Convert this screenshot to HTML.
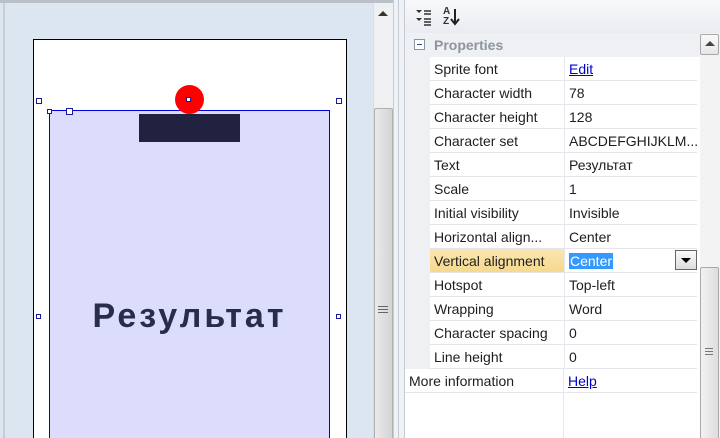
<!DOCTYPE html>
<html style="overflow:hidden;width:720px;height:438px"><head><meta charset="utf-8"><style>
*{margin:0;padding:0;box-sizing:border-box}
body{width:720px;height:438px;overflow:hidden;position:relative;background:#f0f0f0;font-family:"Liberation Sans","DejaVu Sans",sans-serif;font-size:14px;color:#1e1e1e}
.a{position:absolute}
.row{position:absolute;left:430px;width:267px;height:24px;border-bottom:1px solid #e3e6eb;background:#fff}
.row .l{position:absolute;left:4px;top:4px;white-space:nowrap}
.row .v{position:absolute;left:134px;top:0;height:23px;padding:4px 4px 0;white-space:nowrap;border-left:1px solid #e3e6eb;width:134px}
.h{position:absolute;width:6px;height:6px;border:1px solid #1a1aa0;background:#fff}
</style></head><body>
<div class="a" style="left:0;top:0;width:393px;height:438px;background:#dce6f1;border-top:3px solid #b9c0c8"></div>
<div class="a" style="left:3px;top:3px;width:2px;height:435px;background:#c8ced6"></div>
<div class="a" style="left:33px;top:39px;width:314px;height:399px;background:#fff;border:1px solid #000;border-bottom:none"></div>
<div class="a" style="left:49px;top:110px;width:281px;height:328px;background:#dcdcfc;border:1px solid #0000e0;border-bottom:none"></div>
<div class="a" style="left:139px;top:114px;width:101px;height:28px;background:#212240"></div>
<div class="a" style="left:49px;top:297px;width:281px;text-align:center;font-family:'Liberation Sans',sans-serif;font-weight:bold;font-size:34px;letter-spacing:3px;color:#2a2c4c">Результат</div>
<div class="a" style="left:175px;top:85px;width:29px;height:29px;border-radius:50%;background:#f00"></div>
<div class="h" style="left:186px;top:97px;width:5px;height:5px"></div>
<div class="h" style="left:36px;top:98px"></div>
<div class="h" style="left:336px;top:98px"></div>
<div class="h" style="left:36px;top:314px;width:5px;height:5px"></div>
<div class="h" style="left:336px;top:314px;width:5px;height:5px"></div>
<div class="a" style="left:50px;top:110px;width:20px;height:1px;background:#0000e0;border-top:1px solid #0000e0"></div>
<div class="h" style="left:47px;top:109px;width:5px;height:5px"></div>
<div class="h" style="left:66px;top:108px;width:7px;height:7px"></div>
<div class="a" style="left:373px;top:3px;width:20px;height:435px;background:#eef0f2;border-left:1px solid #d8dde3"></div>
<div class="a" style="left:378px;top:11px;width:0;height:0;border-left:5px solid transparent;border-right:5px solid transparent;border-bottom:5px solid #333"></div>
<div class="a" style="left:374px;top:108px;width:19px;height:330px;background:linear-gradient(90deg,#eaeaea,#d4d4d4);border:1px solid #b0b0b0;border-bottom:none;border-radius:2px 2px 0 0"></div>
<div class="a" style="left:378px;top:306px;width:10px;height:7px;border-top:1px solid #666;border-bottom:1px solid #666"><div style="margin-top:2px;border-top:1px solid #666"></div></div>
<div class="a" style="left:393px;top:0;width:12px;height:438px;background:#eef1f5;border-left:1px solid #c5cbd2;border-right:1px solid #c5cbd2"></div>
<div class="a" style="left:398px;top:0;width:1px;height:438px;background:#c5cbd2"></div>
<div class="a" style="left:405px;top:0;width:315px;height:33px;background:linear-gradient(#f8f9fb,#e9ecf1)"></div>
<svg class="a" style="left:414px;top:8px" width="22" height="18"><path d="M2 2l3 3 3-3z M2 10l3 3 3-3z" fill="#333"/><path d="M10 3h7M10 6h7M10 11h7M10 14h7M10 17h7" stroke="#333" stroke-width="1.5"/></svg>
<div class="a" style="left:443px;top:7px;font-size:10px;font-weight:bold;line-height:10px;color:#333">A<br>Z</div>
<svg class="a" style="left:450px;top:8px" width="10" height="18"><path d="M5 1v14M1 11l4 5 4-5" stroke="#222" stroke-width="2" fill="none"/></svg>
<div class="a" style="left:405px;top:33px;width:295px;height:405px;background:#fff"></div>
<div class="a" style="left:405px;top:33px;width:25px;height:336px;background:#eef0f4"></div>
<div class="a" style="left:430px;top:33px;width:270px;height:24px;background:#eef0f4"></div>
<div class="a" style="left:414px;top:39px;width:11px;height:11px;border:1px solid #8a94a2;background:#fff"><div style="margin:4px 2px;height:1px;background:#2b4aa0"></div></div>
<div class="a" style="left:434px;top:37px;font-weight:bold;color:#8e95a0;font-size:14px">Properties</div>
<div class="row" style="top:57px"><span class="l">Sprite font</span><span class="v"><u style="color:#00c">Edit</u></span></div>
<div class="row" style="top:81px"><span class="l">Character width</span><span class="v">78</span></div>
<div class="row" style="top:105px"><span class="l">Character height</span><span class="v">128</span></div>
<div class="row" style="top:129px"><span class="l">Character set</span><span class="v">ABCDEFGHIJKLM...</span></div>
<div class="row" style="top:153px"><span class="l">Text</span><span class="v">Результат</span></div>
<div class="row" style="top:177px"><span class="l">Scale</span><span class="v">1</span></div>
<div class="row" style="top:201px"><span class="l">Initial visibility</span><span class="v">Invisible</span></div>
<div class="row" style="top:225px"><span class="l">Horizontal align...</span><span class="v">Center</span></div>
<div class="row" style="top:249px"><div class="a" style="left:0;top:0;width:134px;height:23px;background:linear-gradient(#fbe6b0,#f5d98e)"></div><span class="l">Vertical alignment</span><span class="v"><span style="background:#3399ff;color:#fff;padding:0 1px">Center</span></span>
<div class="a" style="left:245px;top:1px;width:22px;height:20px;border:1px solid #666;background:linear-gradient(#fafafa,#ddd)"><div style="margin:7px auto;width:0;height:0;border-left:5px solid transparent;border-right:5px solid transparent;border-top:5px solid #000"></div></div></div>
<div class="row" style="top:273px"><span class="l">Hotspot</span><span class="v">Top-left</span></div>
<div class="row" style="top:297px"><span class="l">Wrapping</span><span class="v">Word</span></div>
<div class="row" style="top:321px"><span class="l">Character spacing</span><span class="v">0</span></div>
<div class="row" style="top:345px"><span class="l">Line height</span><span class="v">0</span></div>
<div class="row" style="top:369px;left:405px;width:292px"><span class="l">More information</span><span class="v" style="left:158px"><u style="color:#00c">Help</u></span></div>
<div class="a" style="left:563px;top:393px;width:1px;height:45px;background:#e3e6eb"></div>
<div class="a" style="left:700px;top:33px;width:20px;height:405px;background:#f3f3f3"></div>
<div class="a" style="left:700px;top:34px;width:19px;height:21px;border:1px solid #a8a8a8;border-radius:2px;background:linear-gradient(#fafafa,#e6e6e6)"><div style="margin:6px auto;width:0;height:0;border-left:5px solid transparent;border-right:5px solid transparent;border-bottom:5px solid #444"></div></div>
<div class="a" style="left:700px;top:267px;width:19px;height:171px;border:1px solid #a8a8a8;border-bottom:none;border-radius:2px 2px 0 0;background:linear-gradient(90deg,#f2f2f2,#dedede)"></div>
<div class="a" style="left:705px;top:348px;width:8px;height:7px;border-top:1px solid #777;border-bottom:1px solid #777"><div style="margin-top:2px;border-top:1px solid #777"></div></div>
</body></html>
